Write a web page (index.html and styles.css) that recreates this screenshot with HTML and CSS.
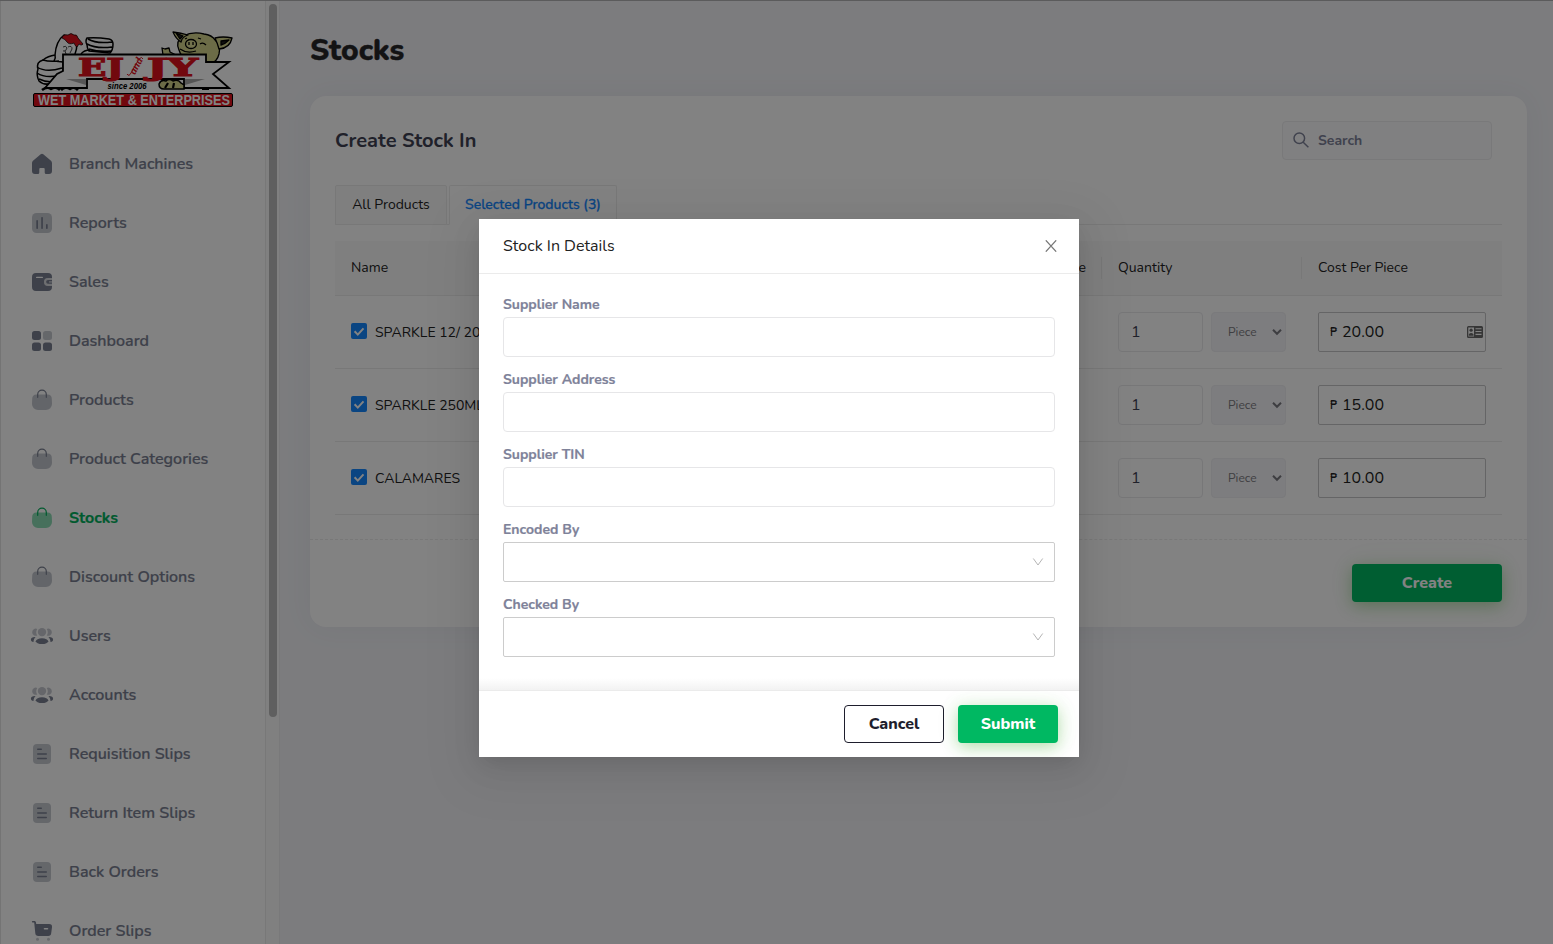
FILE: index.html
```html
<!DOCTYPE html>
<html lang="en">
<head>
<meta charset="utf-8">
<title>Stocks</title>
<link rel="stylesheet" href="styles.css">
</head>
<body>
<svg width="0" height="0" class="defs">
  <symbol id="i-home" viewBox="0 0 24 24"><path d="M10.700 2.300a2 2 0 0 1 2.600 0l7.400 6.200c.8.7 1.300 1.600 1.300 2.700V19a3 3 0 0 1-3 3h-2.800a1.500 1.500 0 0 1-1.500-1.500V17a1 1 0 0 0-1-1h-3.400a1 1 0 0 0-1 1v3.500A1.500 1.500 0 0 1 7.800 22H5a3 3 0 0 1-3-3v-7.800c0-1.100.5-2 1.300-2.700z"/></symbol>
  <symbol id="i-chart" viewBox="0 0 24 24"><rect opacity=".42" x="2" y="2" width="20" height="20" rx="4.500"/><rect x="6.300" y="9" width="1.700" height="9" rx=".8"/><rect x="11.200" y="6" width="1.700" height="12" rx=".8"/><rect x="16" y="13" width="1.700" height="5" rx=".8"/></symbol>
  <symbol id="i-wallet" viewBox="0 0 24 24"><path fill-rule="evenodd" d="M6 3h12a4 4 0 0 1 4 4v.9h-4a4 4 0 0 0 0 8h4V17a4 4 0 0 1-4 4H6a4 4 0 0 1-4-4V7a4 4 0 0 1 4-4zm.7 3.700a.7.7 0 0 0 0 1.400h5.600a.7.7 0 0 0 0-1.400z"/><path opacity=".3" d="M18 7.900h4v8h-4a4 4 0 0 1 0-8z"/><path d="M18 10h4v3.700h-4a1.850 1.850 0 0 1 0-3.700z"/><rect x="19" y="11" width="3" height="1.800" fill="#fff" opacity=".45"/></symbol>
  <symbol id="i-grid" viewBox="0 0 24 24"><rect x="2" y="2" width="9" height="9" rx="2.500"/><rect opacity=".42" x="13" y="2" width="9" height="9" rx="2.500"/><rect x="2" y="13.500" width="9" height="8.500" rx="2.500"/><rect x="13" y="13.500" width="9" height="8.500" rx="2.500"/></symbol>
  <symbol id="i-bag" viewBox="0 0 24 24"><path opacity=".45" d="M6.500 6.500h11A4.500 4.500 0 0 1 21.800 11l.2 5a6 6 0 0 1-6 6H8a6 6 0 0 1-6-6l.2-5A4.500 4.500 0 0 1 6.500 6.500z"/><path fill="none" stroke="currentColor" stroke-width="1.200" stroke-linecap="round" d="M7.700 9.300V6.500a4.300 4.300 0 0 1 8.600 0v2.800"/></symbol>
  <symbol id="i-users" viewBox="0 0 24 24"><g opacity=".42"><circle cx="12" cy="8.100" r="4.200"/><path d="M7.200 4.900A3.600 3.600 0 1 0 7.200 11.500 6.500 6.500 0 0 1 7.200 4.900zM16.800 4.900A3.600 3.600 0 1 1 16.800 11.500 6.500 6.500 0 0 0 16.800 4.900z"/></g><ellipse cx="12" cy="17.200" rx="6.200" ry="2.900"/><path d="M5.600 13.100C2.500 12.900.9 14.200.9 15.700c0 1.200.9 1.900 2.600 2.200.1-2 .7-3.400 2.100-4.800zM18.400 13.100c3.100-.2 4.700 1.100 4.700 2.600 0 1.200-.9 1.900-2.600 2.200-.1-2-.7-3.400-2.100-4.800z"/></symbol>
  <symbol id="i-doc" viewBox="0 0 24 24"><rect opacity=".42" x="3" y="2" width="18" height="20" rx="4"/><rect x="7" y="6.600" width="5" height="1.400" rx=".7"/><rect x="7" y="11.200" width="10" height="1.500" rx=".7"/><rect x="7" y="15.800" width="10" height="1.500" rx=".7"/></symbol>
  <symbol id="i-cart" viewBox="0 0 24 24"><path fill-rule="evenodd" d="M2.600 2h1.600c1 0 1.700.7 1.800 1.600L6.200 5H19a3 3 0 0 1 3 3.300l-.8 6a3 3 0 0 1-3 2.700H8.300a3 3 0 0 1-3-2.700L4.200 3.500H2.600a.75.75 0 0 1 0-1.500zM14.500 9a.8.8 0 0 0 0 1.600h3a.8.8 0 0 0 0-1.600z"/><circle opacity=".4" cx="7.500" cy="20.200" r="1.500"/><circle opacity=".4" cx="18.500" cy="20.200" r="1.500"/></symbol>
  <symbol id="i-check" viewBox="0 0 16 16"><rect width="16" height="16" rx="2"/><path d="M3.600 8.300l3.200 3.300 5.700-6.300" fill="none" stroke="#fff" stroke-width="2"/></symbol>
  <symbol id="i-caret" viewBox="0 0 10 8"><path d="M1 1.800l4 4 4-4" fill="none" stroke="currentColor" stroke-width="2"/></symbol>
  <symbol id="i-down" viewBox="0 0 12 12"><path d="M1.300 2.500L6 9l4.700-6.500" fill="none" stroke="currentColor" stroke-width="1"/></symbol>
</svg>

<div class="app">
  <aside class="sidebar">
    <svg class="logo" viewBox="0 0 202 80" width="202" height="80">
      <g fill="#fff" stroke="#000" stroke-width="1.500" stroke-linejoin="round">
        <path d="M23 25q1-14 9-20l10 4q5 5 1 15v18H14q-8-2-7-9l4-3q5-4 12-5z"/>
        <path d="M23 25q1 3-1 6l9 1v9q-1 8-10 12-9 3-14-2-3-6-1-12-2-7 5-9 6 2 16 1"/>
        <path d="M5 37q9 6 25 1M5 43q9 6 24 2M7 49q8 4 18 2"/>
        <path d="M58 20q-6 0-9 4M57 21q-2-3-2-6-2-4 0-7 9-1 22 1 4 1 4 5 0 6-3 9zM56 9q8 5 24 3M55 14q9 5 25 3M57 19q9 3 22 2"/>
        <path d="M10 60q5-4 9-1 5-3 9 1M29 60q4-4 9-1 4-3 8 1" stroke-width="2.600"/>
      </g>
      <path d="M30 8q1-4 6-3 3-3 6 0 3-1 4 3l5 6-1 1q-2 0-3-1l-2 3q-2-1-3-4-5 2-7-1-2-3-5-4z" fill="#e0111c" stroke="#000" stroke-width=".7"/>
      <path d="M31 17q3-2 4 1-1 4-4 3m5-4q4-2 4 2l-2 4M33 21l1 3" fill="none" stroke="#000" stroke-width=".7"/>
      <g stroke="#000" stroke-width="1.300" stroke-linejoin="round">
        <path d="M147 20q-4-9 4-14 10-5 21-2 8 1 11 6 6 5 4 14-2 8-8 9h-20q-10-5-12-13z" fill="#d5d58b"/>
        <path d="M141 2q8 1 15 3-6 2-7 7-5-3-8-10zM200 8q-9-2-17 0 2 4 4 11 11-1 13-11z" fill="#d5d58b"/>
        <path d="M144 3l7 3-3 3zM189 11l8-1q-4 4-8 5z" fill="#222"/>
        <ellipse cx="159" cy="14" rx="5.500" ry="4.500" fill="#dede98"/>
        <path d="M157 12v3M161 12v3M168 14q3-2 6 1M153 9l2-1M148 19q7 5 16 2M166 8l3 1" fill="none"/>
        <path d="M131 25l-1-7 3 1 4-1 1 4 6 3z" fill="#d5d58b"/>
      </g>
      <path d="M31 24.500h143v7.500h23l-16 12 16 14h-45v-9H55v9H13l12-14 6-3z" fill="#fff" stroke="#000" stroke-width="1.800"/>
      <path d="M34 49h20v6zM173 49h-20v6z" fill="#aaa"/>
      <path d="M127 54q2-5 7-3 3-3 7 0 5-2 8 2l3 2v4h-20q-5 0-5-5z" fill="#d5d58b" stroke="#000" stroke-width="1.500"/>
      <path d="M133 58l3-5M141 58l1-5M170 59h7" stroke="#000" stroke-width="2.200"/>
      <g font-family="'DejaVu Serif',serif" font-weight="700" font-size="24" fill="#e0111c" stroke="#e0111c" stroke-width="1.200">
        <text x="46" y="45.500" textLength="46" lengthAdjust="spacingAndGlyphs">EJ</text>
        <text x="115" y="45.500" textLength="51" lengthAdjust="spacingAndGlyphs">JY</text>
      </g>
      <text transform="translate(103 45) rotate(-62)" font-family="'Liberation Serif',serif" font-style="italic" font-weight="700" font-size="11" fill="#e0111c" textLength="17">and</text>
      <path d="M95 44q2 3 4-1l8-14q3-3 4 0" stroke="#e0111c" fill="none"/>
      <text x="75.500" y="59" font-family="'Liberation Sans',sans-serif" font-style="italic" font-weight="700" font-size="8.500" textLength="39" lengthAdjust="spacingAndGlyphs">since 2006</text>
      <rect x="1.500" y="63.500" width="199" height="13" rx="1.500" fill="#e0111c" stroke="#000"/>
      <text x="6" y="75" font-family="'Liberation Sans',sans-serif" font-weight="700" font-size="14" fill="#fff" textLength="192" lengthAdjust="spacingAndGlyphs">WET MARKET &amp; ENTERPRISES</text>
    </svg>
    <nav class="nav">
      <a class="nav-item"><svg><use href="#i-home"/></svg><span>Branch Machines</span></a>
      <a class="nav-item"><svg><use href="#i-chart"/></svg><span>Reports</span></a>
      <a class="nav-item"><svg><use href="#i-wallet"/></svg><span>Sales</span></a>
      <a class="nav-item"><svg><use href="#i-grid"/></svg><span>Dashboard</span></a>
      <a class="nav-item"><svg><use href="#i-bag"/></svg><span>Products</span></a>
      <a class="nav-item"><svg><use href="#i-bag"/></svg><span>Product Categories</span></a>
      <a class="nav-item active"><svg><use href="#i-bag"/></svg><span>Stocks</span></a>
      <a class="nav-item"><svg><use href="#i-bag"/></svg><span>Discount Options</span></a>
      <a class="nav-item"><svg><use href="#i-users"/></svg><span>Users</span></a>
      <a class="nav-item"><svg><use href="#i-users"/></svg><span>Accounts</span></a>
      <a class="nav-item"><svg><use href="#i-doc"/></svg><span>Requisition Slips</span></a>
      <a class="nav-item"><svg><use href="#i-doc"/></svg><span>Return Item Slips</span></a>
      <a class="nav-item"><svg><use href="#i-doc"/></svg><span>Back Orders</span></a>
      <a class="nav-item"><svg><use href="#i-cart"/></svg><span>Order Slips</span></a>
    </nav>
  </aside>
  <div class="scrollbar"><div class="thumb"></div></div>
  <main class="main">
    <h1 class="page-title"><span>Stocks</span></h1>
    <section class="card">
      <header class="card-head">
        <h2>Create Stock In</h2>
        <div class="search">
          <svg viewBox="0 0 16 16"><circle cx="6.300" cy="6.300" r="5.300"/><path d="M10.200 10.200l5.200 5"/></svg>
          <span>Search</span>
        </div>
      </header>
      <div class="tabs">
        <div class="tab">All Products</div>
        <div class="tab current">Selected Products (3)</div>
      </div>
      <div class="table">
        <div class="row head"><div>Name</div><div class="end">Price</div><div>Quantity</div><div>Cost Per Piece</div></div>
        <div class="row">
          <div class="name"><svg><use href="#i-check"/></svg>SPARKLE 12/ 200ML</div><div></div>
          <div class="qty"><div class="box">1</div><div class="unit">Piece<svg><use href="#i-caret"/></svg></div></div>
          <div class="cost"><div class="money"><i>₱</i>20.00
            <svg class="idcard" viewBox="0 0 16 12"><path fill-rule="evenodd" d="M1.500 0h13A1.500 1.500 0 0 1 16 1.500v9a1.500 1.500 0 0 1-1.500 1.500h-13A1.500 1.500 0 0 1 0 10.500v-9A1.500 1.500 0 0 1 1.500 0zM1.300 1.500v9h5.700v-9zM8.500 2.200v1.100h6V2.200zm0 2.800v1.100h6V5zm0 2.800v1.100h6V7.800z"/><circle cx="4.100" cy="4.200" r="1.600"/><path d="M1.800 9.800V8.300q2.300-2.400 4.700 0v1.500z"/></svg></div></div>
        </div>
        <div class="row">
          <div class="name"><svg><use href="#i-check"/></svg>SPARKLE 250ML</div><div></div>
          <div class="qty"><div class="box">1</div><div class="unit">Piece<svg><use href="#i-caret"/></svg></div></div>
          <div class="cost"><div class="money"><i>₱</i>15.00</div></div>
        </div>
        <div class="row">
          <div class="name"><svg><use href="#i-check"/></svg>CALAMARES</div><div></div>
          <div class="qty"><div class="box">1</div><div class="unit">Piece<svg><use href="#i-caret"/></svg></div></div>
          <div class="cost"><div class="money"><i>₱</i>10.00</div></div>
        </div>
      </div>
      <footer class="card-foot"><button class="btn primary wide">Create</button></footer>
    </section>
  </main>
</div>

<div class="mask">
  <div class="modal">
    <header class="modal-head"><span>Stock In Details</span>
      <svg viewBox="0 0 12 12"><path d="M.8.3l10.400 11.400M11.200.3L.8 11.700"/></svg>
    </header>
    <div class="modal-body">
      <label class="field"><span>Supplier Name</span><div class="input"></div></label>
      <label class="field"><span>Supplier Address</span><div class="input"></div></label>
      <label class="field"><span>Supplier TIN</span><div class="input"></div></label>
      <label class="field"><span>Encoded By</span><div class="input select"><svg><use href="#i-down"/></svg></div></label>
      <label class="field"><span>Checked By</span><div class="input select"><svg><use href="#i-down"/></svg></div></label>
    </div>
    <footer class="modal-foot"><button class="btn outline">Cancel</button><button class="btn primary">Submit</button></footer>
  </div>
</div>
</body>
</html>
```
FILE: styles.css
```css
* { box-sizing: border-box; }
body { margin: 0; height: 944px; overflow: hidden; font-family: Nunito, Lato, "Noto Sans", sans-serif; font-size: 14px; color: #222; background: #f3f4f8; }
.defs { position: absolute; }
svg { fill: currentColor; display: block; flex: none; }
h1, h2 { margin: 0; }

.app { display: flex; height: 944px; overflow: hidden; border-top: 1px solid #b2b2b4; }
.sidebar { width: 266px; flex: none; background: #fff; border-left: 1px solid #e4e4e4; border-right: 1px solid #ececec; padding: 29px 0 0 31px; }
.logo { display: block; fill: #000; }
.nav { display: flex; flex-direction: column; margin-top: 24px; }
.nav-item { display: flex; align-items: center; height: 59px; flex: none; gap: 16px; color: #7a7f92; font-size: 16px; font-weight: 600; -webkit-text-stroke: .2px currentColor; }
.nav-item svg { width: 24px; height: 24px; margin-left: -2px; color: #7a8092; }
.nav-item span { margin-left: -1px; }
.nav-item.active { font-weight: 700; }
.nav-item.active, .nav-item.active svg { color: #00b05c; }
.scrollbar { width: 14px; flex: none; background: #fbfbfb; border-right: 1px solid #ededef; padding: 3px 0 0 3px; }
.thumb { width: 8px; height: 713px; border-radius: 4px; background: #bbb; }

.main { flex: 1; padding: 0 26px 0 30px; }
.page-title { height: 95px; padding-top: 32px; font-size: 30px; line-height: 36px; font-weight: 800; color: #262628; -webkit-text-stroke: .4px currentColor; }
.card { background: #fff; border-radius: 16px; box-shadow: 0 0 30px rgba(56, 71, 109, .06); height: 531px; }
.card-head { display: flex; justify-content: space-between; align-items: center; padding: 25px 35px 0 25px; height: 64px; }
.card-head h2 { font-size: 20px; font-weight: 700; color: #3f4254; }
.search { width: 210px; height: 39px; border: 1px solid #ededf0; border-radius: 4px; background: #fcfcfd; display: flex; align-items: center; gap: 9px; padding-left: 10px; color: #7e8299; font-weight: 700; }
.search svg { width: 16px; height: 16px; margin-top: -1px; fill: none; stroke: currentColor; stroke-width: 1.500; }
.tabs { display: flex; gap: 2px; margin: 25px 25px 0; height: 40px; box-shadow: inset 0 -1px #ececec; }
.tab { border: 1px solid #ececec; border-radius: 2px 2px 0 0; width: 112px; display: flex; align-items: center; justify-content: center; background: #fafafa; padding-bottom: 1px; }
.tab.current { width: 168px; background: #fff; border-bottom-color: #fff; color: #1487ff; font-weight: 500; -webkit-text-stroke: .3px currentColor; }

.table { margin: 16px 25px 0; }
.row { display: grid; grid-template-columns: 567px 200px 200px 200px; height: 73px; align-items: center; border-bottom: 1px solid #ececec; }
.row > div { padding-left: 16px; }
.row.head { height: 55px; background: #fafafa; }
.row.head > div { height: 22px; line-height: 21px; border-right: 1px solid #ececec; }
.row.head > div:last-child { border: 0; }
.row .end { text-align: right; padding-right: 15px; }
.name { display: flex; align-items: center; gap: 8px; }
.name svg { width: 16px; height: 16px; color: #1487ff; margin-top: -2px; }
.qty { display: flex; gap: 8px; }
.box { width: 85px; height: 40px; border: 1px solid #e9e9ec; border-radius: 4px; padding-left: 12px; line-height: 38px; font-size: 16px; color: #3f4254; }
.unit { width: 75px; height: 40px; border: 1px solid #efeff3; border-radius: 4px; background: #f5f5f9; display: flex; align-items: center; justify-content: space-between; padding: 0 3px 0 16px; font-size: 12px; color: #7a7a80; }
.unit svg { width: 10px; height: 8px; }
.money { width: 168px; height: 40px; border: 1px solid #c6c6c8; border-radius: 2px; display: flex; align-items: center; padding: 0 2px 0 11px; font-size: 16px; }
.money i { font: 12px "DejaVu Sans", sans-serif; width: 12px; }
.idcard { width: 16px; height: 12px; margin-left: auto; color: #6a6a6a; }
.card-foot { margin-top: 24px; border-top: 1px dashed #ececec; padding: 24px 25px 0; display: flex; justify-content: flex-end; }

.btn { width: 100px; height: 38px; border-radius: 4px; border: 0; font: inherit; font-size: 16px; font-weight: 800; padding: 0; }
.primary { background: #00b862; color: #fff; box-shadow: 0 4px 16px rgba(86, 180, 70, .42), 0 0 30px rgba(86, 180, 70, .06); }
.wide { width: 150px; }
.outline { background: #fff; border: 1px solid #1e1e2d; color: #1e1e2d; }

.mask { position: absolute; inset: 0; height: 944px; background: rgba(0, 0, 0, .49); display: flex; justify-content: center; align-items: flex-start; padding: 219px 0 0 5px; }
.modal { width: 600px; height: 538px; background: #fff; box-shadow: 0 6px 16px -8px rgba(0, 0, 0, .1), 0 9px 28px rgba(0, 0, 0, .08), 0 12px 48px 16px rgba(0, 0, 0, .05); display: flex; flex-direction: column; }
.modal-head { height: 55px; border-bottom: 1px solid #ebebeb; display: flex; align-items: center; justify-content: space-between; padding: 0 22px 0 24px; font-size: 16px; }
.modal-head svg { width: 12px; height: 12px; fill: none; stroke: #777; stroke-width: 1.200; }
.modal-body { height: 416px; padding: 20px 24px 0; display: flex; flex-direction: column; gap: 12px; background: linear-gradient(#fff 404px, #f2f2f2 416px); }
.field { display: flex; flex-direction: column; height: 63px; color: #7e8299; font-weight: 700; -webkit-text-stroke: .2px currentColor; }
.field span { height: 23px; line-height: 22px; }
.input { height: 40px; border: 1px solid #e6e6e8; border-radius: 4px; background: #fff; }
.select { border-color: #ccc; border-radius: 2px; display: flex; align-items: center; justify-content: flex-end; padding-right: 10px; color: #b5b5b5; }
.select svg { width: 12px; height: 12px; }
.modal-foot { height: 67px; border-top: 1px solid #ebebeb; display: flex; justify-content: flex-end; gap: 14px; padding: 14px 21px 0; overflow: hidden; }
```
